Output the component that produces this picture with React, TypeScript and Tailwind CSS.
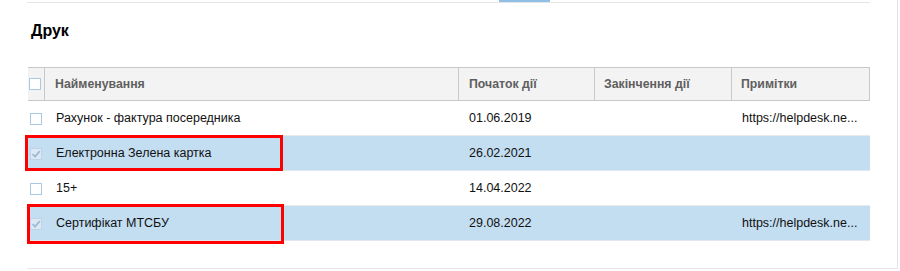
import React from "react";

const Check = ({ checked }: { checked: boolean }) =>
  checked ? (
    <svg width="12" height="12" viewBox="0 0 12 12" className="block">
      <rect x="0.5" y="0.5" width="11" height="11" fill="#dce9f5" stroke="#bcd4ea" />
      <path d="M2.5 6 L5 8.6 L9.8 3.2" fill="none" stroke="#9db9d4" strokeWidth="1.8" />
    </svg>
  ) : (
    <svg width="12" height="12" viewBox="0 0 12 12" className="block">
      <rect x="0.5" y="0.5" width="11" height="11" fill="#ffffff" stroke="#a9cae6" />
    </svg>
  );

const rows = [
  { name: "Рахунок - фактура посередника", start: "01.06.2019", end: "", note: "https://helpdesk.ne...", sel: false },
  { name: "Електронна Зелена картка", start: "26.02.2021", end: "", note: "", sel: true },
  { name: "15+", start: "14.04.2022", end: "", note: "", sel: false },
  { name: "Сертифікат МТСБУ", start: "29.08.2022", end: "", note: "https://helpdesk.ne...", sel: true },
];

export default function App() {
  return (
    <div
      className="relative w-[900px] h-[271px] bg-white overflow-hidden"
      style={{ fontFamily: '"Liberation Sans", Arial, sans-serif' }}
    >
      <div className="absolute left-[499px] top-0 w-[51px] h-[2px] bg-[#8fbfe6]" />
      <div className="ml-[27px] w-[871px] h-[269px] border-r border-b border-[#e4e4ea] flex flex-col">
        <div className="w-[843px] mt-[2px] bg-[#e6e6e6] h-[1px]" />
        <div className="pl-[4px] pt-[19px] h-[64px] text-[16px] font-bold text-black leading-[18px]">Друк</div>
        <div className="ml-[1px] w-[842px] text-[12.5px] text-[#111]">
          <div className="flex h-[34px] bg-[#f3f3f3] border-t border-b border-[#c8c8c8] text-[#5f5f5f] font-bold text-[12.3px]">
            <div className="w-[17px] flex items-center justify-end pr-[3px] border-r border-[#c8c8c8]">
              <Check checked={false} />
            </div>
            <div className="w-[414px] flex items-center pl-[10px] border-r border-[#c8c8c8]">Найменування</div>
            <div className="w-[136px] flex items-center pl-[10px] border-r border-[#c8c8c8]">Початок дії</div>
            <div className="w-[137px] flex items-center pl-[9px] border-r border-[#c8c8c8]">Закінчення дії</div>
            <div className="w-[138px] flex items-center pl-[9px] border-r border-[#c8c8c8]">Примітки</div>
          </div>
          {rows.map((r, i) => (
            <div
              key={i}
              className={`flex h-[35px] border-b pt-[1px] ${r.sel ? "bg-[#c3ddf1] border-[#e2e8ee]" : "bg-white border-[#e9e9e9]"}`}
            >
              <div className="w-[17px] flex items-center justify-end pr-[3px]">
                <Check checked={r.sel} />
              </div>
              <div className="w-[414px] flex items-center pl-[11px]">{r.name}</div>
              <div className="w-[136px] flex items-center pl-[10px]">{r.start}</div>
              <div className="w-[137px] flex items-center pl-[9px]">{r.end}</div>
              <div className="w-[138px] flex items-center pl-[10px] whitespace-nowrap">{r.note}</div>
            </div>
          ))}
        </div>
      </div>
      <div className="absolute left-[25px] top-[135px] w-[258px] h-[36px] border-[3px] border-[#ff0000]" />
      <div className="absolute left-[27px] top-[204px] w-[257px] h-[40px] border-[3px] border-[#ff0000]" />
    </div>
  );
}
